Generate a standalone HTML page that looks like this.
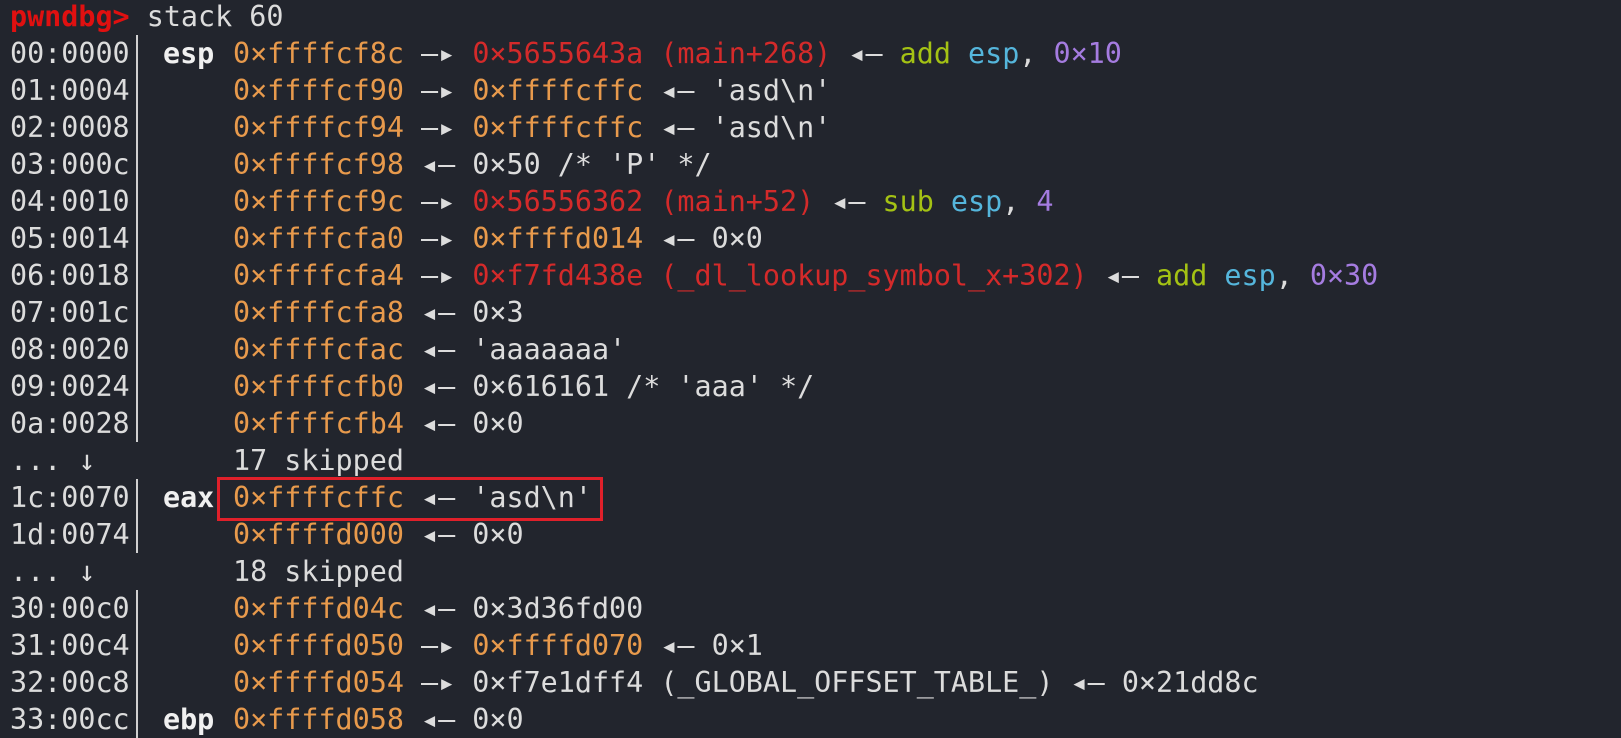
<!DOCTYPE html>
<html><head><meta charset="utf-8"><style>
body{margin:0;width:1621px;height:734px;background:#22252d;overflow:hidden;position:relative;font-family:"DejaVu Sans Mono","Liberation Mono",monospace;font-size:28.4px;color:#dcdcdc}
.l{position:absolute;left:0;height:37px;line-height:37px;white-space:pre;width:1621px}
.i{position:absolute;left:10px}
.b{position:absolute;left:136px;top:0;width:2px;height:37px;background:#d0d0d0}
.r{position:absolute;left:163px;font-weight:bold;color:#f0f0f0}
.v{position:absolute;left:233px}
.o{color:#e89a4c}.d{color:#d42a2a}.g{color:#a4c214}.c{color:#55b6dc}.p{color:#a57ce0}
.box{position:absolute;left:217px;top:477px;width:380px;height:38px;border:3px solid #e0202a}
</style></head><body>
<div class="l" style="top:-2px"><span class="i"><b style="color:#e01010">pwndbg&gt;</b> stack 60</span></div>
<div class="l" style="top:35px"><span class="i">00:0000</span><span class="b"></span><span class="r">esp</span><span class="v"><span class="o">0×ffffcf8c</span> —▸ <span class="d">0×5655643a (main+268)</span> ◂— <span class="g">add</span> <span class="c">esp</span>, <span class="p">0×10</span></span></div>
<div class="l" style="top:72px"><span class="i">01:0004</span><span class="b"></span><span class="v"><span class="o">0×ffffcf90</span> —▸ <span class="o">0×ffffcffc</span> ◂— 'asd\n'</span></div>
<div class="l" style="top:109px"><span class="i">02:0008</span><span class="b"></span><span class="v"><span class="o">0×ffffcf94</span> —▸ <span class="o">0×ffffcffc</span> ◂— 'asd\n'</span></div>
<div class="l" style="top:146px"><span class="i">03:000c</span><span class="b"></span><span class="v"><span class="o">0×ffffcf98</span> ◂— 0×50 /* 'P' */</span></div>
<div class="l" style="top:183px"><span class="i">04:0010</span><span class="b"></span><span class="v"><span class="o">0×ffffcf9c</span> —▸ <span class="d">0×56556362 (main+52)</span> ◂— <span class="g">sub</span> <span class="c">esp</span>, <span class="p">4</span></span></div>
<div class="l" style="top:220px"><span class="i">05:0014</span><span class="b"></span><span class="v"><span class="o">0×ffffcfa0</span> —▸ <span class="o">0×ffffd014</span> ◂— 0×0</span></div>
<div class="l" style="top:257px"><span class="i">06:0018</span><span class="b"></span><span class="v"><span class="o">0×ffffcfa4</span> —▸ <span class="d">0×f7fd438e (_dl_lookup_symbol_x+302)</span> ◂— <span class="g">add</span> <span class="c">esp</span>, <span class="p">0×30</span></span></div>
<div class="l" style="top:294px"><span class="i">07:001c</span><span class="b"></span><span class="v"><span class="o">0×ffffcfa8</span> ◂— 0×3</span></div>
<div class="l" style="top:331px"><span class="i">08:0020</span><span class="b"></span><span class="v"><span class="o">0×ffffcfac</span> ◂— 'aaaaaaa'</span></div>
<div class="l" style="top:368px"><span class="i">09:0024</span><span class="b"></span><span class="v"><span class="o">0×ffffcfb0</span> ◂— 0×616161 /* 'aaa' */</span></div>
<div class="l" style="top:405px"><span class="i">0a:0028</span><span class="b"></span><span class="v"><span class="o">0×ffffcfb4</span> ◂— 0×0</span></div>
<div class="l" style="top:442px"><span class="i">... ↓</span><span class="v">17 skipped</span></div>
<div class="l" style="top:479px"><span class="i">1c:0070</span><span class="b"></span><span class="r">eax</span><span class="v"><span class="o">0×ffffcffc</span> ◂— 'asd\n'</span></div>
<div class="l" style="top:516px"><span class="i">1d:0074</span><span class="b"></span><span class="v"><span class="o">0×ffffd000</span> ◂— 0×0</span></div>
<div class="l" style="top:553px"><span class="i">... ↓</span><span class="v">18 skipped</span></div>
<div class="l" style="top:590px"><span class="i">30:00c0</span><span class="b"></span><span class="v"><span class="o">0×ffffd04c</span> ◂— 0×3d36fd00</span></div>
<div class="l" style="top:627px"><span class="i">31:00c4</span><span class="b"></span><span class="v"><span class="o">0×ffffd050</span> —▸ <span class="o">0×ffffd070</span> ◂— 0×1</span></div>
<div class="l" style="top:664px"><span class="i">32:00c8</span><span class="b"></span><span class="v"><span class="o">0×ffffd054</span> —▸ 0×f7e1dff4 (_GLOBAL_OFFSET_TABLE_) ◂— 0×21dd8c</span></div>
<div class="l" style="top:701px"><span class="i">33:00cc</span><span class="b"></span><span class="r">ebp</span><span class="v"><span class="o">0×ffffd058</span> ◂— 0×0</span></div>
<div class="box"></div>
</body></html>
